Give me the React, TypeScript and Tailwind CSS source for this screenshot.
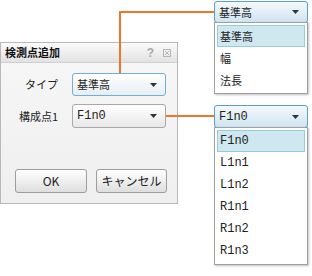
import React from "react";

const jp = { fontFamily: '"Noto Sans CJK JP", "Noto Sans", sans-serif' };
const mono = { fontFamily: '"Liberation Mono", "DejaVu Sans Mono", monospace' };

function Arrow() {
  return (
    <svg width="7" height="4" viewBox="0 0 7 4" className="shrink-0">
      <path d="M0 0 H7 L3.5 4 Z" fill="#333" />
    </svg>
  );
}

function Combo({ text, focused, isMono, blue }: { text: string; focused?: boolean; isMono?: boolean; blue?: boolean }) {
  const border = focused ? "border-[#6fb1d6]" : blue ? "border-[#5f9fc6]" : "border-[#a9a9a9]";
  const bg = blue
    ? "bg-[linear-gradient(#f4f9fc,#cfe4f2)]"
    : focused
    ? "bg-[linear-gradient(#ffffff,#e6eef4)]"
    : "bg-[linear-gradient(#ffffff,#e8e8e8)]";
  return (
    <div className={`flex h-full items-center justify-between rounded-[3px] border ${border} ${bg} pl-[4px] pr-[8px] text-[11px] text-[#222]`}>
      <span style={isMono ? { ...mono, fontSize: "12px" } : jp}>{text}</span>
      <Arrow />
    </div>
  );
}

function List({ items, isMono }: { items: string[]; isMono?: boolean }) {
  return (
    <div className="-mt-px border border-[#a0a0a0] bg-white p-[2px] shadow-[1px_1px_2px_rgba(0,0,0,0.25)]">
      {items.map((it, i) => (
        <div
          key={it}
          className={`flex h-[22px] items-center pl-[2px] text-[11px] text-[#222] ${i === 0 ? "border border-[#94cde0] bg-[#cfe7ef]" : "border border-transparent"}`}
          style={isMono ? { ...mono, fontSize: "12px" } : jp}
        >
          {it}
        </div>
      ))}
    </div>
  );
}

function Button({ children }: { children: React.ReactNode }) {
  return (
    <div
      className="flex h-[24px] items-center justify-center rounded-[3px] border border-[#9d9d9d] bg-[linear-gradient(#ffffff,#dedede)] text-[12px] text-[#222]"
      style={jp}
    >
      {children}
    </div>
  );
}

export default function App() {
  return (
    <div className="relative flex h-[276px] w-[312px] bg-white">
      {/* dialog */}
      <div className="mt-[42px] flex h-[162px] w-[178px] flex-col border border-[#b8b8b8] bg-[#f3f3f3]">
        <div className="flex h-[20px] items-center justify-between border-b border-[#d0d0d0] bg-[linear-gradient(#fbfbfb,#e2e2e2)] pl-[4px] pr-[6px]">
          <span className="text-[11px] font-bold text-[#111]" style={jp}>検測点追加</span>
          <div className="flex items-center gap-[9px]">
            <span className="text-[12px] font-bold text-[#a8a8a8]" style={{ fontFamily: '"Liberation Sans", sans-serif' }}>?</span>
            <svg width="8" height="8" viewBox="0 0 8 8">
              <rect x="0.5" y="0.5" width="7" height="7" fill="none" stroke="#b5b5b5" />
              <path d="M2 2 L6 6 M6 2 L2 6" stroke="#b5b5b5" />
            </svg>
          </div>
        </div>
        <div className="flex flex-1 flex-col bg-[linear-gradient(#f6f6f6,#efefef)] pt-[10px]">
          <div className="flex h-[23px] items-center">
            <span className="w-[58px] pr-[1px] text-right text-[11px] text-[#222]" style={jp}>タイプ</span>
            <div className="ml-[13px] h-full w-[94px]">
              <Combo text="基準高" focused />
            </div>
          </div>
          <div className="mt-[8px] flex h-[24px] items-center">
            <span className="w-[58px] pr-[1px] text-right text-[11px] text-[#222]" style={jp}>構成点1</span>
            <div className="ml-[13px] h-full w-[94px]">
              <Combo text="F1n0" isMono />
            </div>
          </div>
          <div className="mt-auto mb-[10px] flex gap-[9px] pl-[14px]">
            <div className="w-[72px]"><Button>OK</Button></div>
            <div className="w-[71px]"><Button>キャンセル</Button></div>
          </div>
        </div>
      </div>

      {/* callouts */}
      <div className="ml-[36px] mt-[1px] flex w-[94px] flex-col">
        <div className="h-[22px]"><Combo text="基準高" blue /></div>
        <List items={["基準高", "幅", "法長"]} />
        <div className="mt-[11px] h-[23px]"><Combo text="F1n0" blue isMono /></div>
        <List items={["F1n0", "L1n1", "L1n2", "R1n1", "R1n2", "R1n3"]} isMono />
      </div>

      <svg className="pointer-events-none absolute left-0 top-0" width="312" height="276">
        <polyline points="120,73 120,12 214,12" fill="none" stroke="#e8782a" strokeWidth="2" />
        <line x1="166" y1="116" x2="214" y2="116" stroke="#e8782a" strokeWidth="2" />
      </svg>
    </div>
  );
}
